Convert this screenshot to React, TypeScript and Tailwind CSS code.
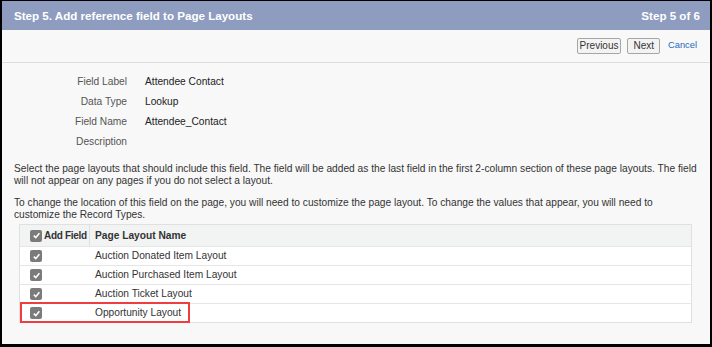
import React from "react";

const font = { fontFamily: '"Liberation Sans", Arial, sans-serif' };

function Check() {
  return (
    <span className="inline-flex h-[12px] w-[12px] shrink-0 items-center justify-center rounded-[2px] bg-[#7b7b7b]">
      <svg width="9" height="9" viewBox="0 0 10 10">
        <path d="M2 5.2 L4.2 7.4 L8.2 2.6" fill="none" stroke="#ffffff" strokeWidth="1.8" />
      </svg>
    </span>
  );
}

const fields: [string, string][] = [
  ["Field Label", "Attendee Contact"],
  ["Data Type", "Lookup"],
  ["Field Name", "Attendee_Contact"],
  ["Description", ""],
];

const layouts = [
  "Auction Donated Item Layout",
  "Auction Purchased Item Layout",
  "Auction Ticket Layout",
  "Opportunity Layout",
];

export default function App() {
  return (
    <div
      style={font}
      className="flex h-[347px] w-[712px] flex-col border-b-[3px] border-l-2 border-r-2 border-t border-black bg-[#f8f8f8] text-[10.2px] text-[#3e3e3c]"
    >
      <div className="flex h-[29px] shrink-0 items-center justify-between bg-[#8e9dbf] pl-[12px] pr-[10px] text-[11.6px] font-bold text-white">
        <span>Step 5. Add reference field to Page Layouts</span>
        <span>Step 5 of 6</span>
      </div>
      <div className="flex h-[33px] shrink-0 items-center justify-end border-b border-[#dddddd] pr-[13px]">
        <button className="h-[16px] rounded-[2px] border border-[#a6a6a6] bg-[#f3f3f3] px-[2px] text-[10px] leading-[14px] text-[#333333]">
          Previous
        </button>
        <button className="ml-[6px] h-[16px] rounded-[2px] border border-[#a6a6a6] bg-[#f3f3f3] px-[5px] text-[10px] leading-[14px] text-[#333333]">
          Next
        </button>
        <span className="ml-[8px] text-[9.3px] text-[#1b6ac0]">Cancel</span>
      </div>
      <div className="flex flex-col pt-[9px]">
        {fields.map(([l, v]) => (
          <div key={l} className="flex h-[20px] items-center">
            <span className="w-[125px] text-right text-[#555555]">{l}</span>
            <span className="ml-[18px] text-[#222222]">{v}</span>
          </div>
        ))}
      </div>
      <div className="whitespace-nowrap pl-[12px] pt-[11px] leading-[12px] text-[#333333]">
        <p>
          Select the page layouts that should include this field. The field will be added as the last field in the
          first 2-column section of these page layouts. The field
          <br />
          will not appear on any pages if you do not select a layout.
        </p>
        <p className="mt-[10px]">
          To change the location of this field on the page, you will need to customize the page layout. To change the
          values that appear, you will need to
          <br />
          customize the Record Types.
        </p>
      </div>
      <div className="relative ml-[17px] mr-[18px] mt-[3px] border border-[#e0e0e0] bg-white">
        <div className="flex h-[21px] items-center bg-[#f2f3f3] font-bold text-[#333333]">
          <div className="flex h-full w-[70px] items-center gap-[2px] whitespace-nowrap border-r border-[#e0e0e0] pl-[10px]">
            <Check />
            <span className="text-[10px] tracking-[-0.3px]">Add Field</span>
          </div>
          <span className="pl-[5px]">Page Layout Name</span>
        </div>
        {layouts.map((n) => (
          <div key={n} className="flex h-[19px] items-center border-t border-[#e6e6e6] text-[#333333]">
            <div className="flex w-[70px] items-center pl-[10px]">
              <Check />
            </div>
            <span className="pl-[5px]">{n}</span>
          </div>
        ))}
        <div className="pointer-events-none absolute left-0 top-[77px] h-[21px] w-[170px] border-2 border-[#ee3e40]" />
      </div>
    </div>
  );
}
